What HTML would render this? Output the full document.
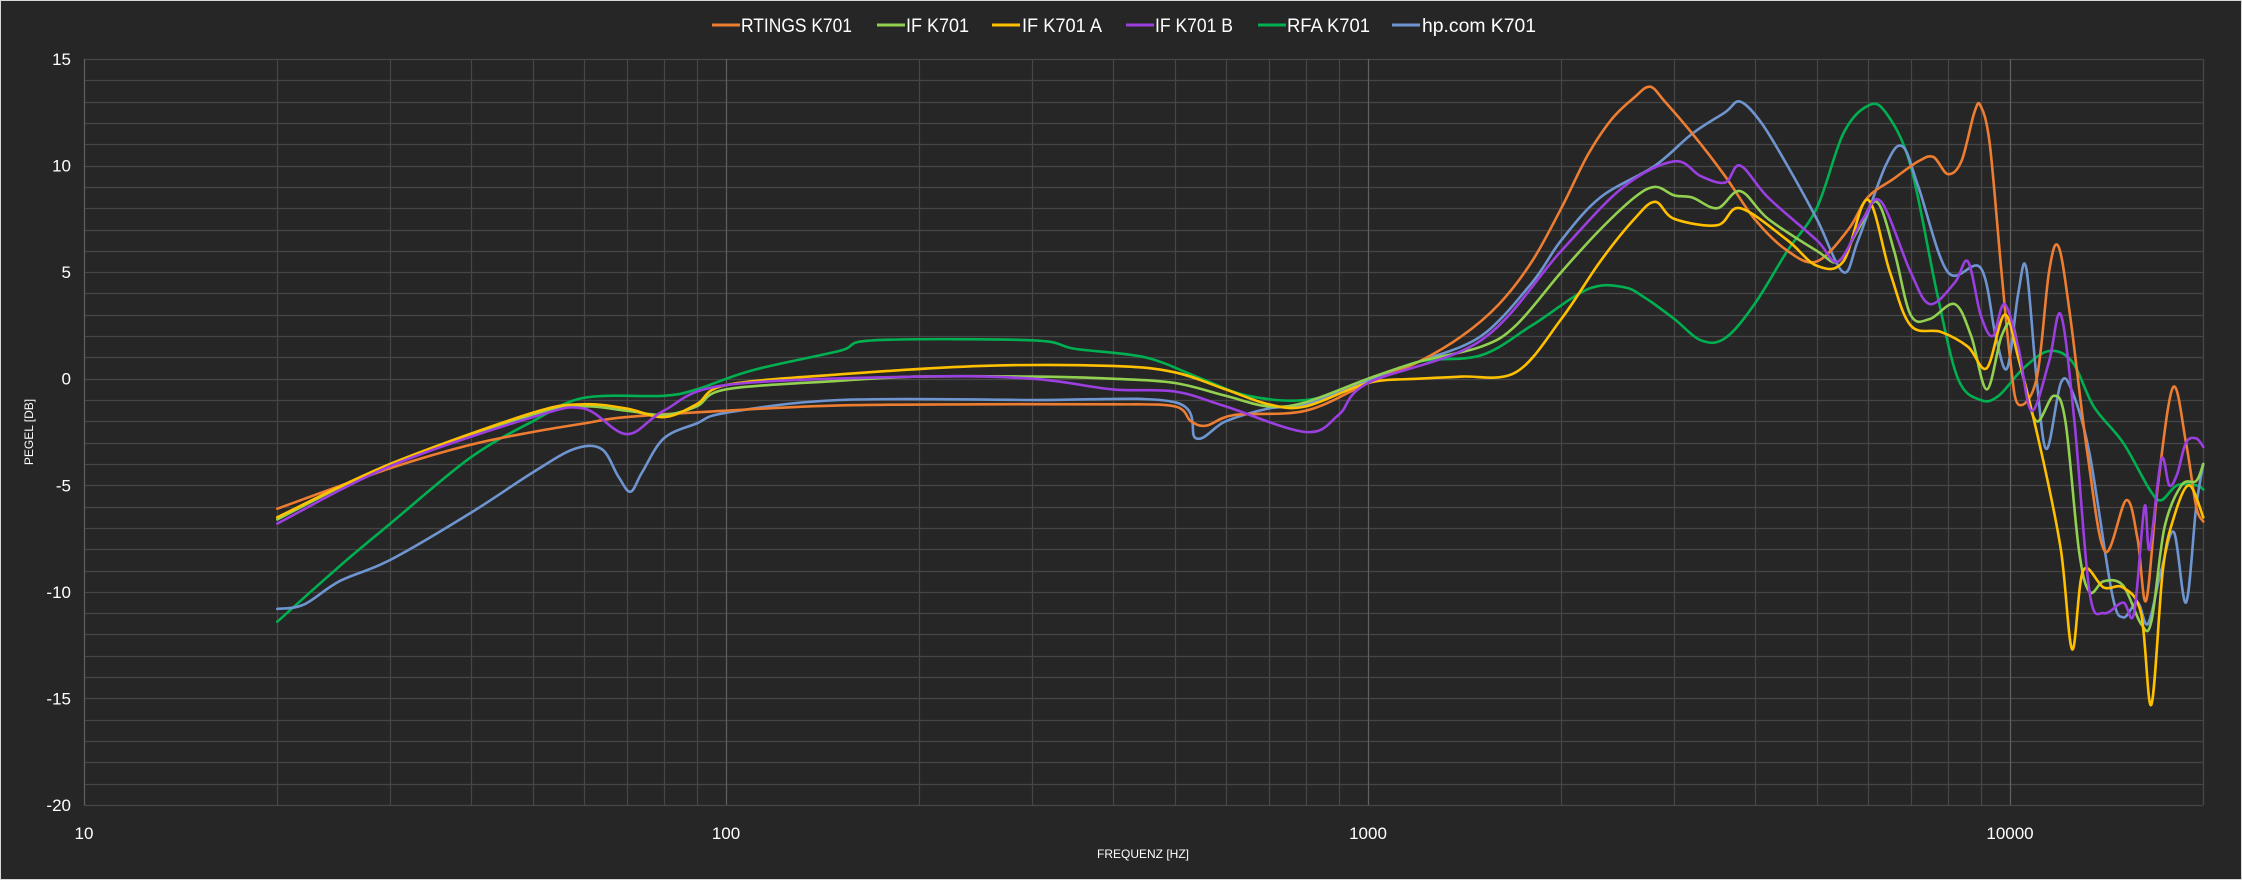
<!DOCTYPE html>
<html><head><meta charset="utf-8"><style>
html,body{margin:0;padding:0;background:#262626;}
body{width:2242px;height:880px;overflow:hidden;position:relative;font-family:"Liberation Sans",sans-serif;}
svg{position:absolute;left:0;top:0;}
</style></head><body>
<svg id="c" width="2242" height="880" xmlns="http://www.w3.org/2000/svg">
<rect x="0.5" y="0.5" width="2241" height="879" fill="#262626" stroke="#d9d9d9" stroke-width="1"/>
<g id="grid"></g>
<g id="curves" fill="none" stroke-width="2.6" stroke-linejoin="round" stroke-linecap="round"></g>
<g font-size="17" fill="#ffffff" text-anchor="end" id="ylab"></g>
<g font-size="17" fill="#ffffff" text-anchor="middle">
<text x="84" y="839">10</text><text x="726" y="839">100</text><text x="1368" y="839">1000</text><text x="2010" y="839">10000</text>
</g>
<text x="1143" y="858" font-size="12" fill="#ffffff" text-anchor="middle">FREQUENZ [HZ]</text>
<text x="0" y="0" font-size="12" fill="#ffffff" text-anchor="middle" transform="translate(33,432) rotate(-90)">PEGEL [DB]</text>
<g font-size="19" fill="#ffffff">
<line x1="712" y1="25" x2="740" y2="25" stroke="#ED7D31" stroke-width="3"/><text x="741" y="32" textLength="111" lengthAdjust="spacingAndGlyphs">RTINGS K701</text>
<line x1="877" y1="25" x2="905" y2="25" stroke="#92D050" stroke-width="3"/><text x="906" y="32" textLength="63" lengthAdjust="spacingAndGlyphs">IF K701</text>
<line x1="992" y1="25" x2="1020" y2="25" stroke="#FFC000" stroke-width="3"/><text x="1022" y="32" textLength="80" lengthAdjust="spacingAndGlyphs">IF K701 A</text>
<line x1="1126" y1="25" x2="1154" y2="25" stroke="#9B3FE0" stroke-width="3"/><text x="1155" y="32" textLength="78" lengthAdjust="spacingAndGlyphs">IF K701 B</text>
<line x1="1258" y1="25" x2="1286" y2="25" stroke="#00B050" stroke-width="3"/><text x="1287" y="32" textLength="83" lengthAdjust="spacingAndGlyphs">RFA K701</text>
<line x1="1392" y1="25" x2="1420" y2="25" stroke="#6E95D0" stroke-width="3"/><text x="1422" y="32" textLength="114" lengthAdjust="spacingAndGlyphs">hp.com K701</text>
</g>
</svg>
<script>
(function(){
var NS="http://www.w3.org/2000/svg";
var X0=84,DEC=642,Y15=59,PDB=21.314;
function fx(f){return X0+(Math.log10(f)-1)*DEC;}
function fy(d){return Y15+(15-d)*PDB;}
var grid=document.getElementById('grid');
function ln(x1,y1,x2,y2,c){var l=document.createElementNS(NS,'line');l.setAttribute('x1',x1);l.setAttribute('y1',y1);l.setAttribute('x2',x2);l.setAttribute('y2',y2);l.setAttribute('stroke',c);l.setAttribute('stroke-width',1.2);grid.appendChild(l);}
var XR=fx(20000);
for(var d=-20;d<=15;d++){var y=Math.round(fy(d))+0.5;ln(X0,y,XR,y,'#464646');}
for(var e=1;e<=4;e++){for(var m=1;m<=9;m++){var f=m*Math.pow(10,e);if(f>20000)break;var x=Math.round(fx(f))+0.5;ln(x,Y15,x,fy(-20),m==1?'#606060':'#464646');}}
ln(Math.round(XR)+0.5,Y15,Math.round(XR)+0.5,fy(-20),'#464646');
var yl=document.getElementById('ylab');
[15,10,5,0,-5,-10,-15,-20].forEach(function(v){var t=document.createElementNS(NS,'text');t.setAttribute('x',71);t.setAttribute('y',fy(v)+6);t.textContent=String(v);yl.appendChild(t);});
var C={
'#00B050':[[20,-11.4],[25,-8.8],[30,-6.8],[40,-3.7],[50,-2],[60,-0.9],[80,-0.8],[90,-0.5],[110,0.4],[150,1.3],[170,1.8],[300,1.8],[350,1.4],[450,1.0],[550,0],[650,-0.8],[800,-1],[1000,-0.2],[1200,0.8],[1500,1.1],[1800,2.5],[2200,4.2],[2500,4.3],[2700,3.8],[3000,2.8],[3300,1.8],[3600,1.9],[4000,3.5],[4500,6],[5000,8],[5500,11.5],[6000,12.8],[6400,12.5],[7000,10],[7700,4],[8300,0],[9000,-1],[9600,-0.8],[10500,0.5],[11500,1.3],[12500,0.8],[13500,-1.3],[15000,-3],[16500,-5.2],[17200,-5.7],[18200,-5],[19500,-5],[20000,-5.2]],
'#6E95D0':[[20,-10.8],[22,-10.6],[25,-9.5],[30,-8.5],[40,-6.3],[50,-4.4],[58,-3.3],[64,-3.3],[68,-4.6],[71,-5.3],[74,-4.4],[80,-2.8],[90,-2.1],[100,-1.6],[150,-1],[300,-1.0],[500,-1.1],[540,-2.8],[600,-2],[700,-1.4],[800,-1.2],[1000,-0.1],[1200,0.8],[1500,2],[1800,4.5],[2000,6.5],[2300,8.5],[2800,10],[3200,11.5],[3600,12.5],[3800,13],[4100,12],[4500,10],[5000,7.5],[5500,5],[5800,6.5],[6400,10],[6800,10.9],[7200,9],[8000,5],[9000,5.2],[9500,2],[9900,0.5],[10300,4],[10600,5.2],[11000,0],[11400,-3.3],[12000,-0.2],[12500,-0.6],[13300,-3.5],[14400,-10],[15000,-11.2],[15800,-10.5],[16400,-11.5],[17200,-9],[18000,-7.2],[18800,-10.5],[19500,-6],[20000,-4]],
'#ED7D31':[[20,-6.1],[30,-4.2],[40,-3.1],[50,-2.5],[60,-2.1],[70,-1.8],[100,-1.5],[150,-1.25],[250,-1.2],[400,-1.2],[500,-1.3],[530,-2],[560,-2.2],[620,-1.7],[800,-1.5],[1000,-0.2],[1200,0.8],[1400,2],[1600,3.5],[1800,5.5],[2000,8],[2200,10.5],[2400,12.2],[2600,13.2],[2750,13.7],[2900,13],[3200,11.5],[3600,9.5],[4000,7.5],[4500,6],[5000,5.5],[5600,7],[6000,8.5],[6600,9.4],[7200,10.2],[7600,10.4],[8000,9.6],[8400,10.2],[8800,12.5],[9000,12.8],[9300,11],[9700,5],[10000,1],[10300,-1.2],[11000,0],[11500,5],[11900,6.2],[12400,3],[13200,-3.5],[14060,-8.1],[15170,-5.7],[15800,-7.5],[16300,-10.4],[17000,-5],[17950,-0.4],[18800,-3],[19500,-6],[20000,-6.7]],
'#92D050':[[20,-6.6],[30,-4],[50,-1.7],[60,-1.3],[70,-1.5],[80,-1.7],[90,-1.3],[100,-0.5],[150,-0.1],[200,0.1],[300,0.1],[400,0.0],[500,-0.2],[600,-0.8],[700,-1.3],[800,-1.1],[1000,0],[1200,0.8],[1500,1.5],[1700,2.5],[2000,5],[2300,7],[2600,8.5],[2800,9],[3000,8.6],[3200,8.5],[3500,8],[3800,8.8],[4200,7.5],[5000,6],[5400,5.5],[5800,7],[6200,8.3],[6600,6],[7000,3],[7500,2.8],[8200,3.5],[8700,2],[9200,-0.5],[9700,2],[10100,2.5],[10500,0],[11000,-2],[11700,-0.8],[12200,-2],[12800,-8],[13300,-10],[14000,-9.5],[15000,-9.7],[16000,-11.5],[16600,-11.4],[17400,-7],[18500,-5],[19500,-4.8],[20000,-4]],
'#FFC000':[[20,-6.5],[30,-4],[50,-1.6],[60,-1.2],[70,-1.4],[80,-1.8],[90,-1.2],[100,-0.3],[150,0.2],[250,0.6],[400,0.6],[500,0.3],[600,-0.5],[700,-1.2],[800,-1.3],[1000,-0.2],[1200,0.0],[1400,0.1],[1700,0.3],[2000,2.8],[2300,5.5],[2600,7.5],[2800,8.3],[3000,7.5],[3500,7.2],[3800,8],[4500,6.5],[5000,5.3],[5500,5.5],[6000,8.4],[6500,5],[7000,2.5],[7800,2.2],[8600,1.5],[9200,0.5],[9800,3],[10300,1],[11200,-3.5],[12000,-8],[12500,-12.7],[13000,-9],[14000,-9.8],[15000,-9.8],[16000,-11],[16600,-15.3],[17300,-9],[18000,-6.5],[19000,-5],[20000,-6.5]],
'#9B3FE0':[[20,-6.8],[30,-4.1],[50,-1.8],[60,-1.4],[70,-2.6],[80,-1.5],[100,-0.3],[200,0.1],[300,0],[400,-0.5],[500,-0.6],[600,-1.3],[800,-2.5],[900,-1.7],[1000,-0.2],[1500,1.8],[2000,6],[2500,9],[3000,10.2],[3300,9.5],[3600,9.2],[3800,10],[4200,8.5],[5000,6.5],[5400,5.5],[5900,7.5],[6300,8.3],[7000,5],[7500,3.5],[8200,4.5],[8600,5.5],[9000,3],[9400,2],[9800,3.5],[10300,1.5],[10800,-1.5],[11500,0.8],[12000,3],[12600,-2],[13300,-10],[14000,-11],[15000,-10.5],[15600,-11],[16200,-6],[16500,-8],[17200,-3.8],[17700,-5],[18200,-4.5],[18800,-3],[19500,-2.8],[20000,-3.2]]
};
var g=document.getElementById('curves');
Object.keys(C).forEach(function(col){
var p=C[col].map(function(a){return [fx(a[0]),fy(a[1])];});
var d='M'+p[0][0].toFixed(1)+' '+p[0][1].toFixed(1);
for(var i=0;i<p.length-1;i++){var p0=p[i-1]||p[i],p1=p[i],p2=p[i+1],p3=p[i+2]||p2;
var c1=[p1[0]+(p2[0]-p0[0])/6,p1[1]+(p2[1]-p0[1])/6],c2=[p2[0]-(p3[0]-p1[0])/6,p2[1]-(p3[1]-p1[1])/6];
d+=' C'+c1[0].toFixed(1)+' '+c1[1].toFixed(1)+' '+c2[0].toFixed(1)+' '+c2[1].toFixed(1)+' '+p2[0].toFixed(1)+' '+p2[1].toFixed(1);}
var pa=document.createElementNS(NS,'path');pa.setAttribute('d',d);pa.setAttribute('stroke',col);g.appendChild(pa);
});
})();
</script>
</body></html>
